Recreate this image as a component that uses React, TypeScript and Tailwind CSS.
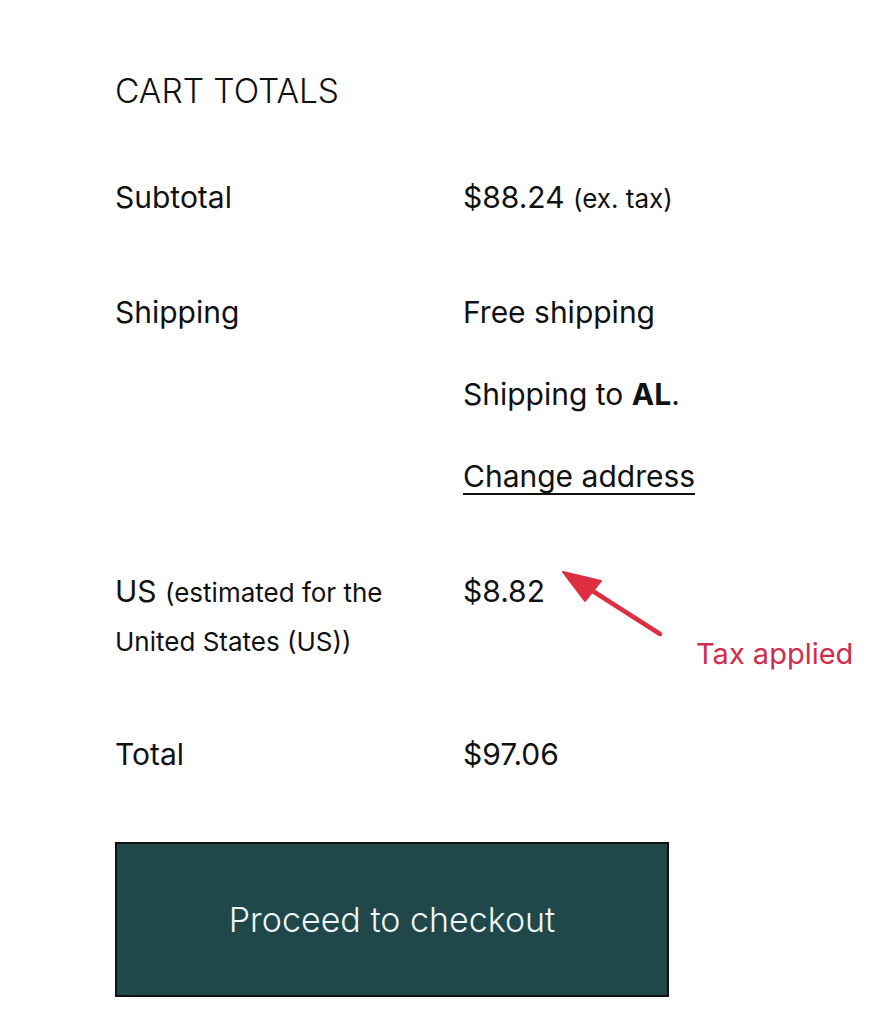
import React from "react";

export default function App() {
  const font = { fontFamily: "Inter, 'Noto Sans', 'Liberation Sans', sans-serif" };
  return (
    <div
      className="relative w-[890px] h-[1024px] bg-white text-[#111111] overflow-hidden"
      style={font}
    >
      <div className="flex flex-col pl-[115px] pt-[71px]">
        <h2 className="text-[33.5px] leading-[40px] font-light">CART TOTALS</h2>

        <div className="grid grid-cols-[348px_1fr] mt-[66px] text-[30px] leading-[40px]">
          <div>Subtotal</div>
          <div>
            $88.24 <span className="text-[26px]">(ex. tax)</span>
          </div>
        </div>

        <div className="grid grid-cols-[348px_1fr] mt-[73px] text-[30px] leading-[40px]">
          <div>Shipping</div>
          <div className="flex flex-col gap-[42px]">
            <div>Free shipping</div>
            <div>
              Shipping to <strong className="font-bold">AL</strong>.
            </div>
            <div>
              <a className="underline underline-offset-[6px] decoration-[2px]">Change address</a>
            </div>
          </div>
        </div>

        <div className="grid grid-cols-[348px_1fr] mt-[75px] text-[30px] leading-[40px]">
          <div className="flex flex-col">
            <div>
              US <span className="text-[26px]">(estimated for the</span>
            </div>
            <div className="text-[26px] leading-[32px] mt-[13px]">United States (US))</div>
          </div>
          <div>$8.82</div>
        </div>

        <div className="grid grid-cols-[348px_1fr] mt-[76px] text-[30px] leading-[40px]">
          <div>Total</div>
          <div>$97.06</div>
        </div>

        <button className="mt-[68px] w-[554px] h-[155px] bg-[#204749] border-2 border-[#111111] text-[#eef7f5] text-[34px] font-light flex items-center justify-center">
          Proceed to checkout
        </button>
      </div>

      <svg className="absolute left-0 top-0" width="890" height="1024" viewBox="0 0 890 1024">
        <line x1="660" y1="634" x2="588" y2="588" stroke="#dc2f42" strokeWidth="4.5" strokeLinecap="round" />
        <polygon points="563,572 601,581 585,601" fill="#dc2f42" stroke="#dc2f42" strokeWidth="2" strokeLinejoin="round" />
      </svg>
      <div className="absolute left-[696px] top-[636px] text-[29px] leading-[36px] text-[#cf2d4e]">
        Tax applied
      </div>
    </div>
  );
}
